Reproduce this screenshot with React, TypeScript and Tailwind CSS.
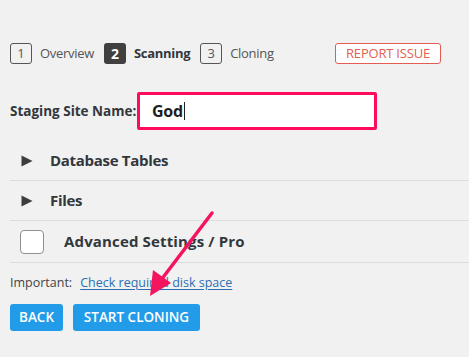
import { FC } from "react";

const StepBox: FC<{ n: string; active?: boolean }> = ({ n, active }) =>
  active ? (
    <span className="flex h-[21px] w-[22px] items-center justify-center rounded-[3px] bg-[#404040] text-[14px] font-bold text-white">
      {n}
    </span>
  ) : (
    <span className="flex h-[21px] w-[22px] items-center justify-center rounded-[3px] border border-[#555] text-[13px] text-[#555]">
      {n}
    </span>
  );

const Triangle = () => (
  <svg width="12" height="12" viewBox="0 0 12 12" className="shrink-0">
    <path d="M0.5 0.5 L11.5 6 L0.5 11.5 Z" fill="#3c3c3c" />
  </svg>
);

const App: FC = () => {
  return (
    <div
      className="relative h-[357px] w-[469px] overflow-hidden bg-[#f1f1f1] text-[#32373c]"
      style={{ fontFamily: '"Open Sans", "Noto Sans", sans-serif' }}
    >
      {/* steps */}
      <div className="flex items-center px-[10px] pt-[43px]">
        <StepBox n="1" />
        <span className="ml-[8px] text-[13px] tracking-[-0.3px] text-[#555]">Overview</span>
        <span className="ml-[10px]">
          <StepBox n="2" active />
        </span>
        <span className="ml-[8px] text-[13px] font-bold tracking-[-0.3px] text-[#32373c]">Scanning</span>
        <span className="ml-[10px]">
          <StepBox n="3" />
        </span>
        <span className="ml-[8px] text-[13px] tracking-[-0.3px] text-[#555]">Cloning</span>
        <span className="ml-auto mr-[18px] flex h-[21px] w-[106px] items-center justify-center rounded-[3px] border border-[#e35d52] bg-white text-[13px] tracking-[-0.2px] text-[#e35d52]">
          REPORT ISSUE
        </span>
      </div>

      {/* staging name */}
      <div className="mt-[28px] flex items-center px-[10px]">
        <span className="w-[127px] text-[13.5px] font-bold">Staging Site Name:</span>
        <div className="flex h-[38px] w-[240px] items-center rounded-[2px] border-[3px] border-[#ff0b5b] bg-white pl-[12px]">
          <span className="text-[16px] font-bold tracking-[-0.3px] text-[#1e1e1e]">God</span>
          <span className="ml-[1px] h-[18px] w-px bg-[#222]" />
        </div>
      </div>

      {/* sections */}
      <div className="mt-[11px] ml-[10px]">
        <div className="flex h-[40px] items-center gap-[17px] border-b border-[#dcdcdc] pl-[11px]">
          <Triangle />
          <span className="text-[15px] font-bold tracking-[-0.3px]">Database Tables</span>
        </div>
        <div className="flex h-[40px] items-center gap-[17px] border-b border-[#dcdcdc] pl-[11px]">
          <Triangle />
          <span className="text-[15px] font-bold tracking-[-0.3px]">Files</span>
        </div>
        <div className="flex h-[42px] items-center gap-[20px] border-b border-[#dcdcdc] pl-[10px]">
          <span className="h-[24px] w-[24px] rounded-[4px] border border-[#8c8f94] bg-white" />
          <span className="text-[15px] font-bold tracking-[0.15px]">Advanced Settings / Pro</span>
        </div>
      </div>

      {/* important */}
      <div className="mt-[11px] flex items-center px-[10px] text-[12.5px]">
        <span className="text-[#444]">Important:</span>
        <span className="ml-[8px] text-[#2a6fb3] underline underline-offset-2">Check required disk space</span>
      </div>

      {/* buttons */}
      <div className="mt-[11px] flex gap-[10px] px-[10px]">
        <button className="h-[27px] w-[53px] rounded-[3px] bg-[#229ce9] text-[13.5px] font-semibold text-white">
          BACK
        </button>
        <button className="h-[27px] w-[127px] rounded-[3px] bg-[#229ce9] text-[13.5px] font-semibold text-white">
          START CLONING
        </button>
      </div>

      {/* annotation arrow */}
      <svg className="pointer-events-none absolute left-0 top-0" width="469" height="357">
        <path d="M212 213 L158 284" stroke="#f5155f" strokeWidth="3.5" strokeLinecap="round" />
        <path d="M150 296 L153 270 L171 283 Z" fill="#f5155f" />
      </svg>
    </div>
  );
};

export default App;
